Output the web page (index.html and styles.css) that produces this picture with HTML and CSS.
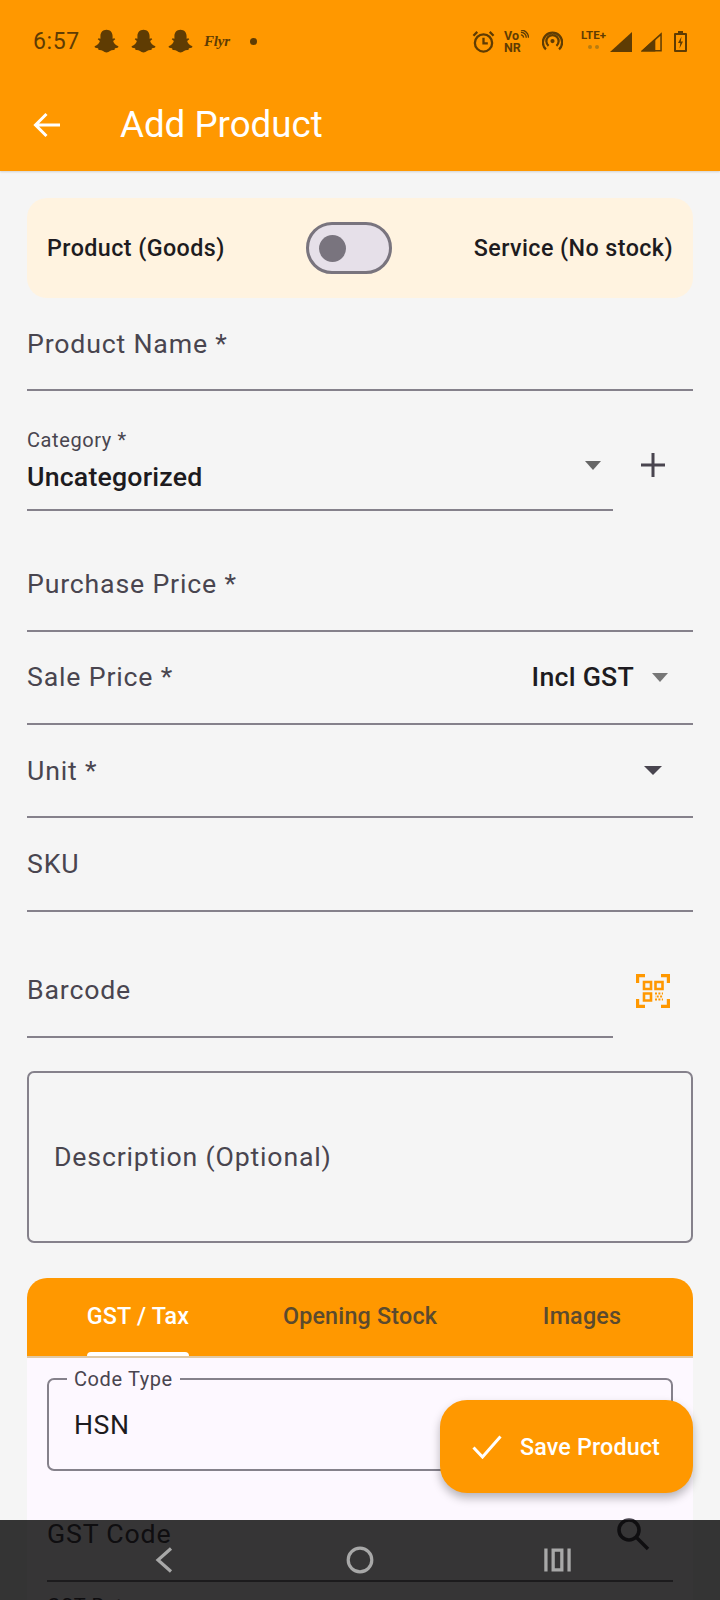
FILE: index.html
```html
<!DOCTYPE html>
<html lang="en">
<head>
<meta charset="utf-8">
<title>Add Product</title>
<link rel="stylesheet" href="styles.css">
</head>
<body>
<svg class="defs" width="0" height="0" aria-hidden="true">
  <symbol id="ghost" viewBox="0 0 24 24"><path d="M12 1.500C15.400 1.500 17.400 4 17.400 7.200V9.600L19 9.100 19.800 10.100 17.900 11.500C18.400 13.500 19.800 15.200 22.600 16.200L22.300 17.300C21.400 17.800 20.400 18 19.500 18.100L19 19.600C17.500 19.400 16.200 19.700 15.100 20.500 14.200 21.200 13.200 21.700 12 21.700S9.800 21.200 8.900 20.500C7.800 19.700 6.500 19.400 5 19.600L4.500 18.100C3.600 18 2.600 17.800 1.700 17.300L1.400 16.200C4.200 15.200 5.600 13.500 6.100 11.500L4.200 10.100 5 9.100 6.600 9.600V7.200C6.600 4 8.600 1.500 12 1.500Z"/></symbol>
  <symbol id="drop" viewBox="0 0 16 9" preserveAspectRatio="none"><path d="M0 0H16L8 9Z"/></symbol>
</svg>
<header class="header">
  <div class="status">
    <div class="status-left">
      <span class="time">6:57</span>
      <svg class="ghost"><use href="#ghost"/></svg>
      <svg class="ghost"><use href="#ghost"/></svg>
      <svg class="ghost"><use href="#ghost"/></svg>
      <span class="flyr">Flyr</span>
      <span class="dot"></span>
    </div>
    <div class="status-right">
      <svg class="st-alarm" viewBox="0 0 24 24" fill="none" stroke="#5f3c03" stroke-width="2.400"><circle cx="12" cy="13.500" r="9"/><path d="M12 8v6h4.500M1.500 6l4-4M22.500 6l-4-4"/></svg>
      <span class="vonr">
        <span class="vo">Vo<svg class="vo-waves" viewBox="0 0 10 10" fill="none" stroke="#5f3c03" stroke-width="1.500"><path d="M1 2.500a6 6 0 0 1 6 6M1 5.500a3.200 3.200 0 0 1 3 3M9.500 8.500A8.500 8.500 0 0 0 1 0"/></svg></span>
        <span>NR</span>
      </span>
      <svg class="st-hot" viewBox="0 0 24 24" fill="none" stroke="#5f3c03" stroke-width="2.600"><circle cx="12" cy="11.500" r="2.400" fill="#5f3c03" stroke="none"/><path d="M7.500 17a7 7 0 1 1 9 0M4.500 21a11 11 0 1 1 15 0"/></svg>
      <span class="lte"><span>LTE+</span><span class="lte-dots"><i></i><i></i></span></span>
      <svg class="st-sig" viewBox="0 0 22 20"><path d="M0 20L22 0V20Z" fill="#5f3c03"/></svg>
      <svg class="st-sig second" viewBox="0 0 22 20"><path d="M0 20L15 6.400V20Z" fill="#5f3c03"/><path d="M1.500 19.200L21 1.700V19.200Z" fill="none" stroke="#5f3c03" stroke-width="1.600"/></svg>
      <svg class="st-bat" viewBox="0 0 13 21"><path d="M4 0h5v2h3a1 1 0 0 1 1 1v17a1 1 0 0 1-1 1H1a1 1 0 0 1-1-1V3a1 1 0 0 1 1-1h3z" fill="#5f3c03"/><rect x="2" y="4" width="9" height="15" fill="#ff9800"/><path d="M7.500 5.500L4 12h2.300L5.500 17.500 9 10.500H6.800Z" fill="#5f3c03"/></svg>
    </div>
  </div>
  <div class="appbar">
    <svg class="back" viewBox="0 0 28 26" fill="none" stroke="#fff" stroke-width="3"><path d="M27 13H3M13.500 2L2.500 13l11 11"/></svg>
    <h1 class="title">Add Product</h1>
  </div>
</header>

<main class="main">
  <section class="type-card">
    <span class="type-label">Product (Goods)</span>
    <span class="switch"><span class="thumb"></span></span>
    <span class="type-label">Service (No stock)</span>
  </section>

  <div class="field"><span class="label">Product Name *</span></div>

  <div class="row gap-top">
    <div class="field grow category">
      <span class="small-label">Category *</span>
      <span class="value">Uncategorized</span>
      <svg class="drop cat-drop"><use href="#drop"/></svg>
    </div>
    <div class="side-action">
      <svg class="plus" viewBox="0 0 26 26" stroke="#49454f" stroke-width="3"><path d="M13 1v24M1 13h24"/></svg>
    </div>
  </div>

  <div class="field gap-top"><span class="label">Purchase Price *</span></div>

  <div class="field spread">
    <span class="label">Sale Price *</span>
    <span class="incl">Incl GST<svg class="drop incl-drop"><use href="#drop"/></svg></span>
  </div>

  <div class="field spread">
    <span class="label">Unit *</span>
    <svg class="drop unit-drop"><use href="#drop"/></svg>
  </div>

  <div class="field"><span class="label">SKU</span></div>

  <div class="row gap-big">
    <div class="field grow"><span class="label">Barcode</span></div>
    <div class="side-action">
      <svg class="qr" viewBox="0 0 34 34" fill="none" stroke="#ff9800">
        <path stroke-width="3.200" d="M1.600 9V1.600H9M25 1.600h7.400V9M1.600 25v7.400H9M25 32.400h7.400V25"/>
        <path stroke-width="2.600" d="M8 8h7v7H8zM19.500 8h7v7h-7zM8 19.500h7v7H8z"/>
        <path stroke-width="1.800" stroke-dasharray="2 1.400" d="M19 19.500h8"/>
        <path stroke-width="1.800" stroke-dasharray="2 1.400" stroke-dashoffset="1.700" d="M19 22.500h8"/>
        <path stroke-width="1.800" stroke-dasharray="2 1.400" d="M19 25.500h8"/>
      </svg>
    </div>
  </div>

  <div class="description"><span class="label">Description (Optional)</span></div>

  <section class="tab-card">
    <div class="tabs">
      <div class="tab active"><span class="tab-inner">GST / Tax<i class="indicator"></i></span></div>
      <div class="tab"><span class="tab-inner">Opening Stock</span></div>
      <div class="tab"><span class="tab-inner">Images</span></div>
    </div>
    <div class="panel">
      <div class="outlined">
        <span class="legend">Code Type</span>
        <span class="outlined-value">HSN</span>
      </div>
      <div class="field spread gst-code">
        <span class="label">GST Code</span>
        <svg class="search" viewBox="0 0 34 34" fill="none" stroke="#49454f" stroke-width="3.600"><circle cx="13" cy="13" r="10"/><path d="M20.500 20.500L32 32"/></svg>
      </div>
      <div class="gst-rate"><span class="small-label">GST Rate</span></div>
    </div>
  </section>
</main>

<button class="fab" type="button">
  <svg class="check" viewBox="0 0 30 24" fill="none" stroke="#fff" stroke-width="3"><path d="M1.500 12.500L10.500 22 28.500 1.500"/></svg>
  <span>Save Product</span>
</button>

<nav class="navbar">
  <svg class="nav-back" viewBox="0 0 18 26" fill="none" stroke="#a8a8a8" stroke-width="3.200"><path d="M16 1.500L3 13l13 11.500"/></svg>
  <svg class="nav-home" viewBox="0 0 28 28" fill="none" stroke="#a8a8a8" stroke-width="3.200"><circle cx="14" cy="14" r="11.800"/></svg>
  <svg class="nav-recent" viewBox="0 0 28 24" fill="none" stroke="#a8a8a8" stroke-width="3.400"><path d="M2 0V24M26 0V24M9.500 1.700h9v20.600h-9z"/></svg>
</nav>
</body>
</html>
```

FILE: styles.css
```css
* { box-sizing: border-box; margin: 0; padding: 0; }
html, body { width: 720px; height: 1600px; overflow: hidden; }
body { position: relative; background: #f5f5f5; font-family: Roboto, "Liberation Sans", sans-serif; color: #1d1b20; }
.defs { position: absolute; }

.header { height: 171px; background: #ff9800; box-shadow: 0 1px 2px rgba(0,0,0,.15); }
.status { height: 78px; padding: 5px 33px 0; display: flex; justify-content: space-between; align-items: center; color: #5f3c03; }
.status-left, .status-right { display: flex; align-items: center; }
.time { font-size: 23px; width: 60px; letter-spacing: .6px; }
.ghost { width: 27px; height: 27px; fill: #5f3c03; margin-right: 10px; }
.flyr { font: italic bold 15px "Liberation Serif", serif; width: 46px; margin-left: 0; letter-spacing: -.2px; }
.dot { width: 7px; height: 7px; border-radius: 50%; background: #5f3c03; }
.st-alarm { width: 23px; height: 23px; }
.vonr { display: flex; flex-direction: column; font-size: 12.500px; font-weight: 700; line-height: 11.500px; margin-left: 9px; width: 24px; }
.vo { display: flex; align-items: flex-start; }
.vo-waves { width: 9px; height: 9px; margin-left: 1px; flex: none; }
.st-hot { width: 21px; height: 21px; margin-left: 14px; }
.lte { display: flex; flex-direction: column; align-items: center; font-size: 11.500px; font-weight: 700; line-height: 12px; margin-left: 17px; width: 27px; height: 26px; }
.lte-dots { display: flex; gap: 3px; margin-top: 4px; }
.lte-dots i { width: 4px; height: 4px; border-radius: 50%; background: #b87c10; }
.st-sig { width: 22px; height: 20px; margin-left: 3px; }
.st-sig.second { width: 21px; margin-left: 9px; }
.st-bat { width: 13px; height: 21px; margin-left: 12px; }

.appbar { height: 93px; display: flex; align-items: center; padding-left: 33px; }
.back { width: 28px; height: 26px; }
.title { margin-left: 59px; font-size: 36.700px; font-weight: 400; color: #fff; }

.main { padding: 27px 27px 0; }
.type-card { height: 100px; padding: 0 20px; background: #fff3e0; border-radius: 20px; display: flex; align-items: center; justify-content: space-between; }
.type-label { font-size: 23.300px; font-weight: 500; letter-spacing: .42px; color: #1d1b20; }
.switch { width: 86px; height: 52px; border: 3px solid #79747e; border-radius: 26px; background: #e6e0e9; display: flex; align-items: center; padding-left: 10px; }
.thumb { width: 27px; height: 27px; border-radius: 50%; background: #79747e; }

.field { position: relative; height: 93.400px; border-bottom: 2px solid #85818b; display: flex; align-items: center; }
.label { font-size: 26.700px; letter-spacing: .82px; color: #49454f; }
.grow { flex: 1; }
.row { display: flex; align-items: center; }
.gap-top { margin-top: 26.700px; }
.gap-big { margin-top: 33px; }
.spread { justify-content: space-between; }
.side-action { width: 80px; display: flex; justify-content: center; }

.category { flex-direction: column; align-items: flex-start; justify-content: flex-start; padding-top: 10px; }
.small-label { font-size: 20px; letter-spacing: .6px; line-height: 24px; color: #49454f; }
.value { font-size: 26.700px; font-weight: 500; letter-spacing: .2px; line-height: 34px; margin-top: 8px; }

.drop { width: 16px; height: 9px; fill: #666; }
.cat-drop { position: absolute; right: 12px; top: 43px; }
.incl { display: flex; align-items: center; font-size: 26.700px; font-weight: 500; letter-spacing: .25px; padding-right: 25px; }
.incl-drop { margin-left: 18px; fill: #777; }
.unit-drop { width: 18px; margin-right: 31px; fill: #49454f; }
.plus { width: 26px; height: 26px; }
.qr { width: 34px; height: 34px; }

.description { height: 172px; margin-top: 33px; padding-left: 25px; border: 2px solid #85818b; border-radius: 7px; display: flex; align-items: center; }

.tab-card { margin-top: 35px; }
.tabs { height: 80px; background: #ff9800; border-radius: 20px 20px 0 0; border-bottom: 2px solid #e0c9a5; display: flex; }
.tab { flex: 1; display: flex; justify-content: center; font-size: 23.300px; font-weight: 500; letter-spacing: .2px; color: #5b4a2e; }
.tab.active { color: #fff; }
.tab-inner { height: 78px; padding-top: 24px; position: relative; }
.indicator { position: absolute; left: 0; right: 0; bottom: 0; height: 4px; background: #fff; border-radius: 5px 5px 0 0; }
.panel { background: #fdf8ff; padding: 20px 20px 0; height: 400px; }
.outlined { position: relative; height: 93px; border: 2px solid #85818b; border-radius: 7px; display: flex; align-items: center; padding-left: 25px; }
.legend { position: absolute; left: 18px; top: -13px; padding: 0 7px; background: #fdf8ff; font-size: 20px; letter-spacing: .6px; line-height: 24px; color: #49454f; }
.outlined-value { font-size: 26.700px; letter-spacing: .5px; color: #1d1b20; }
.gst-code { margin-top: 17px; height: 94px; }
.search { width: 34px; height: 34px; margin-right: 23px; }
.gst-rate { padding-top: 12px; }

.fab { position: absolute; left: 440px; top: 1400px; width: 253px; height: 93px; border: 0; border-radius: 27px; background: #ff9800; color: #fff; font: 500 23.300px Roboto, sans-serif; letter-spacing: .15px; display: flex; align-items: center; padding-left: 32px; gap: 18px; box-shadow: 0 5px 10px rgba(0,0,0,.28); }
.check { width: 30px; height: 24px; }

.navbar { position: absolute; left: 0; right: 0; top: 1520px; height: 80px; background: rgba(0,0,0,.79); display: grid; grid-template-columns: 326px 68px 326px; justify-items: center; align-items: center; }
.nav-back { width: 18px; height: 26px; margin-left: 2px; }
.nav-home { width: 28px; height: 28px; }
.nav-recent { width: 27px; height: 24px; }
```
